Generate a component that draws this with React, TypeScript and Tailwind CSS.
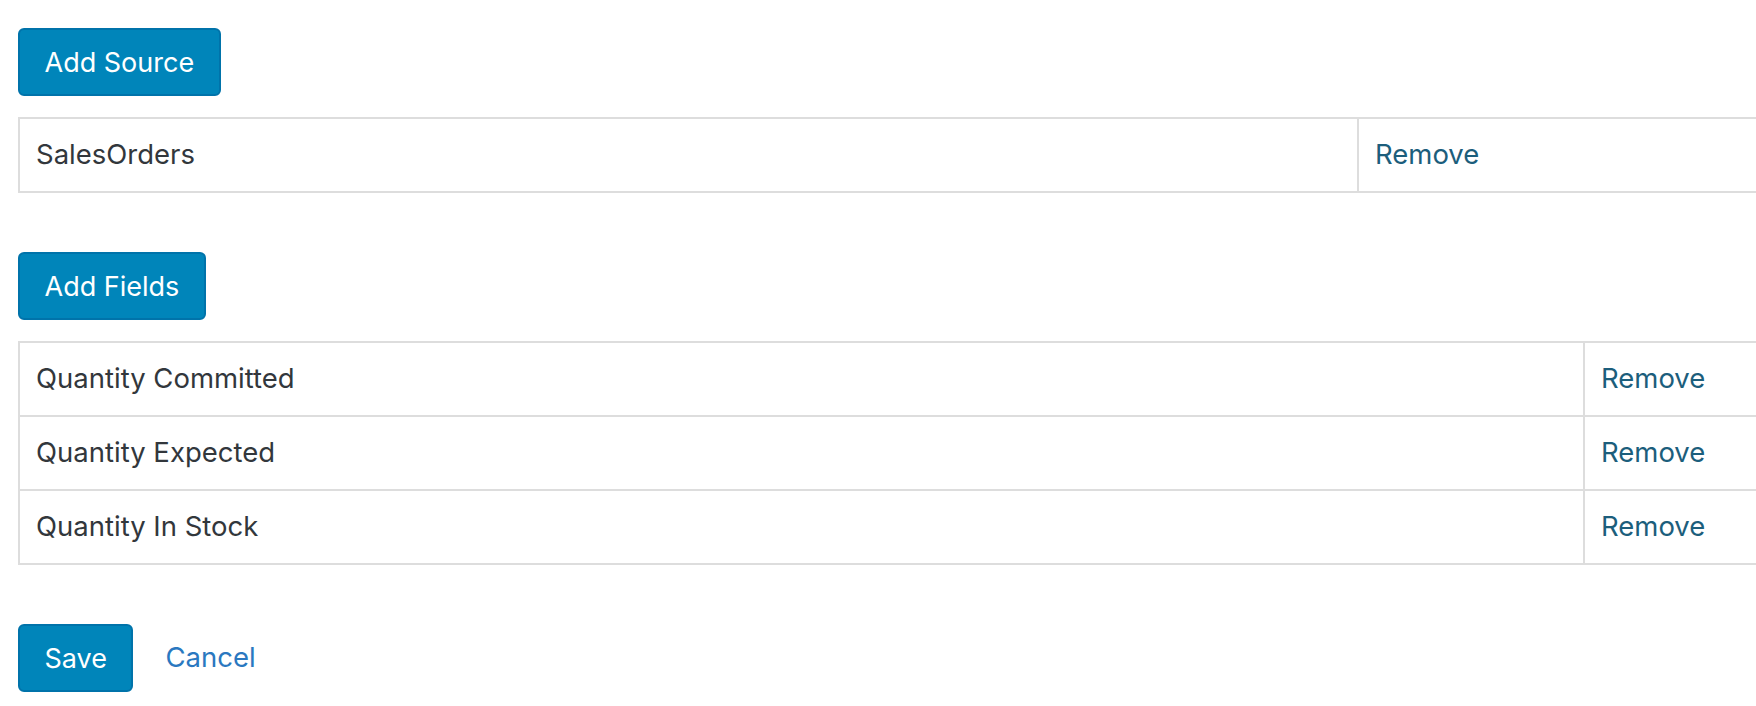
import React from "react"

const sources = ["SalesOrders"]
const fields = ["Quantity Committed", "Quantity Expected", "Quantity In Stock"]

const font = { fontFamily: "Inter, 'Liberation Sans', sans-serif" }

const PrimaryButton = ({ children }: { children: React.ReactNode }) => (
  <button className="h-[68px] px-[24.5px] rounded-[6px] border-2 border-[#0073aa] bg-[#0085ba] text-white text-[27px] leading-none">
    {children}
  </button>
)

const ItemTable = ({ rows, firstCol }: { rows: string[]; firstCol: string }) => (
  <table className="w-[1840px] border-collapse border-2 border-[#dddddd] text-[27.5px] text-[#32373c]">
    <tbody>
      {rows.map((r) => (
        <tr key={r} className="h-[74px] border-b-2 border-[#dddddd]">
          <td className={`${firstCol} pl-[16px] border-r-2 border-[#dddddd]`}>{r}</td>
          <td className="pl-[16px]">
            <a href="#" className="text-[#1c5e7c]">
              Remove
            </a>
          </td>
        </tr>
      ))}
    </tbody>
  </table>
)

export default function App() {
  return (
    <div className="w-full h-[706px] overflow-hidden bg-white" style={font}>
      <div className="pl-[18px] pt-[28px] flex flex-col items-start">
        <PrimaryButton>Add Source</PrimaryButton>
        <div className="mt-[21px]">
          <ItemTable rows={sources} firstCol="w-[1339px]" />
        </div>
        <div className="mt-[59px]">
          <PrimaryButton>Add Fields</PrimaryButton>
        </div>
        <div className="mt-[21px]">
          <ItemTable rows={fields} firstCol="w-[1565px]" />
        </div>
        <div className="mt-[59px] flex items-center gap-[32px]">
          <PrimaryButton>Save</PrimaryButton>
          <a href="#" className="text-[27.5px] text-[#2a78c0]">
            Cancel
          </a>
        </div>
      </div>
    </div>
  )
}
